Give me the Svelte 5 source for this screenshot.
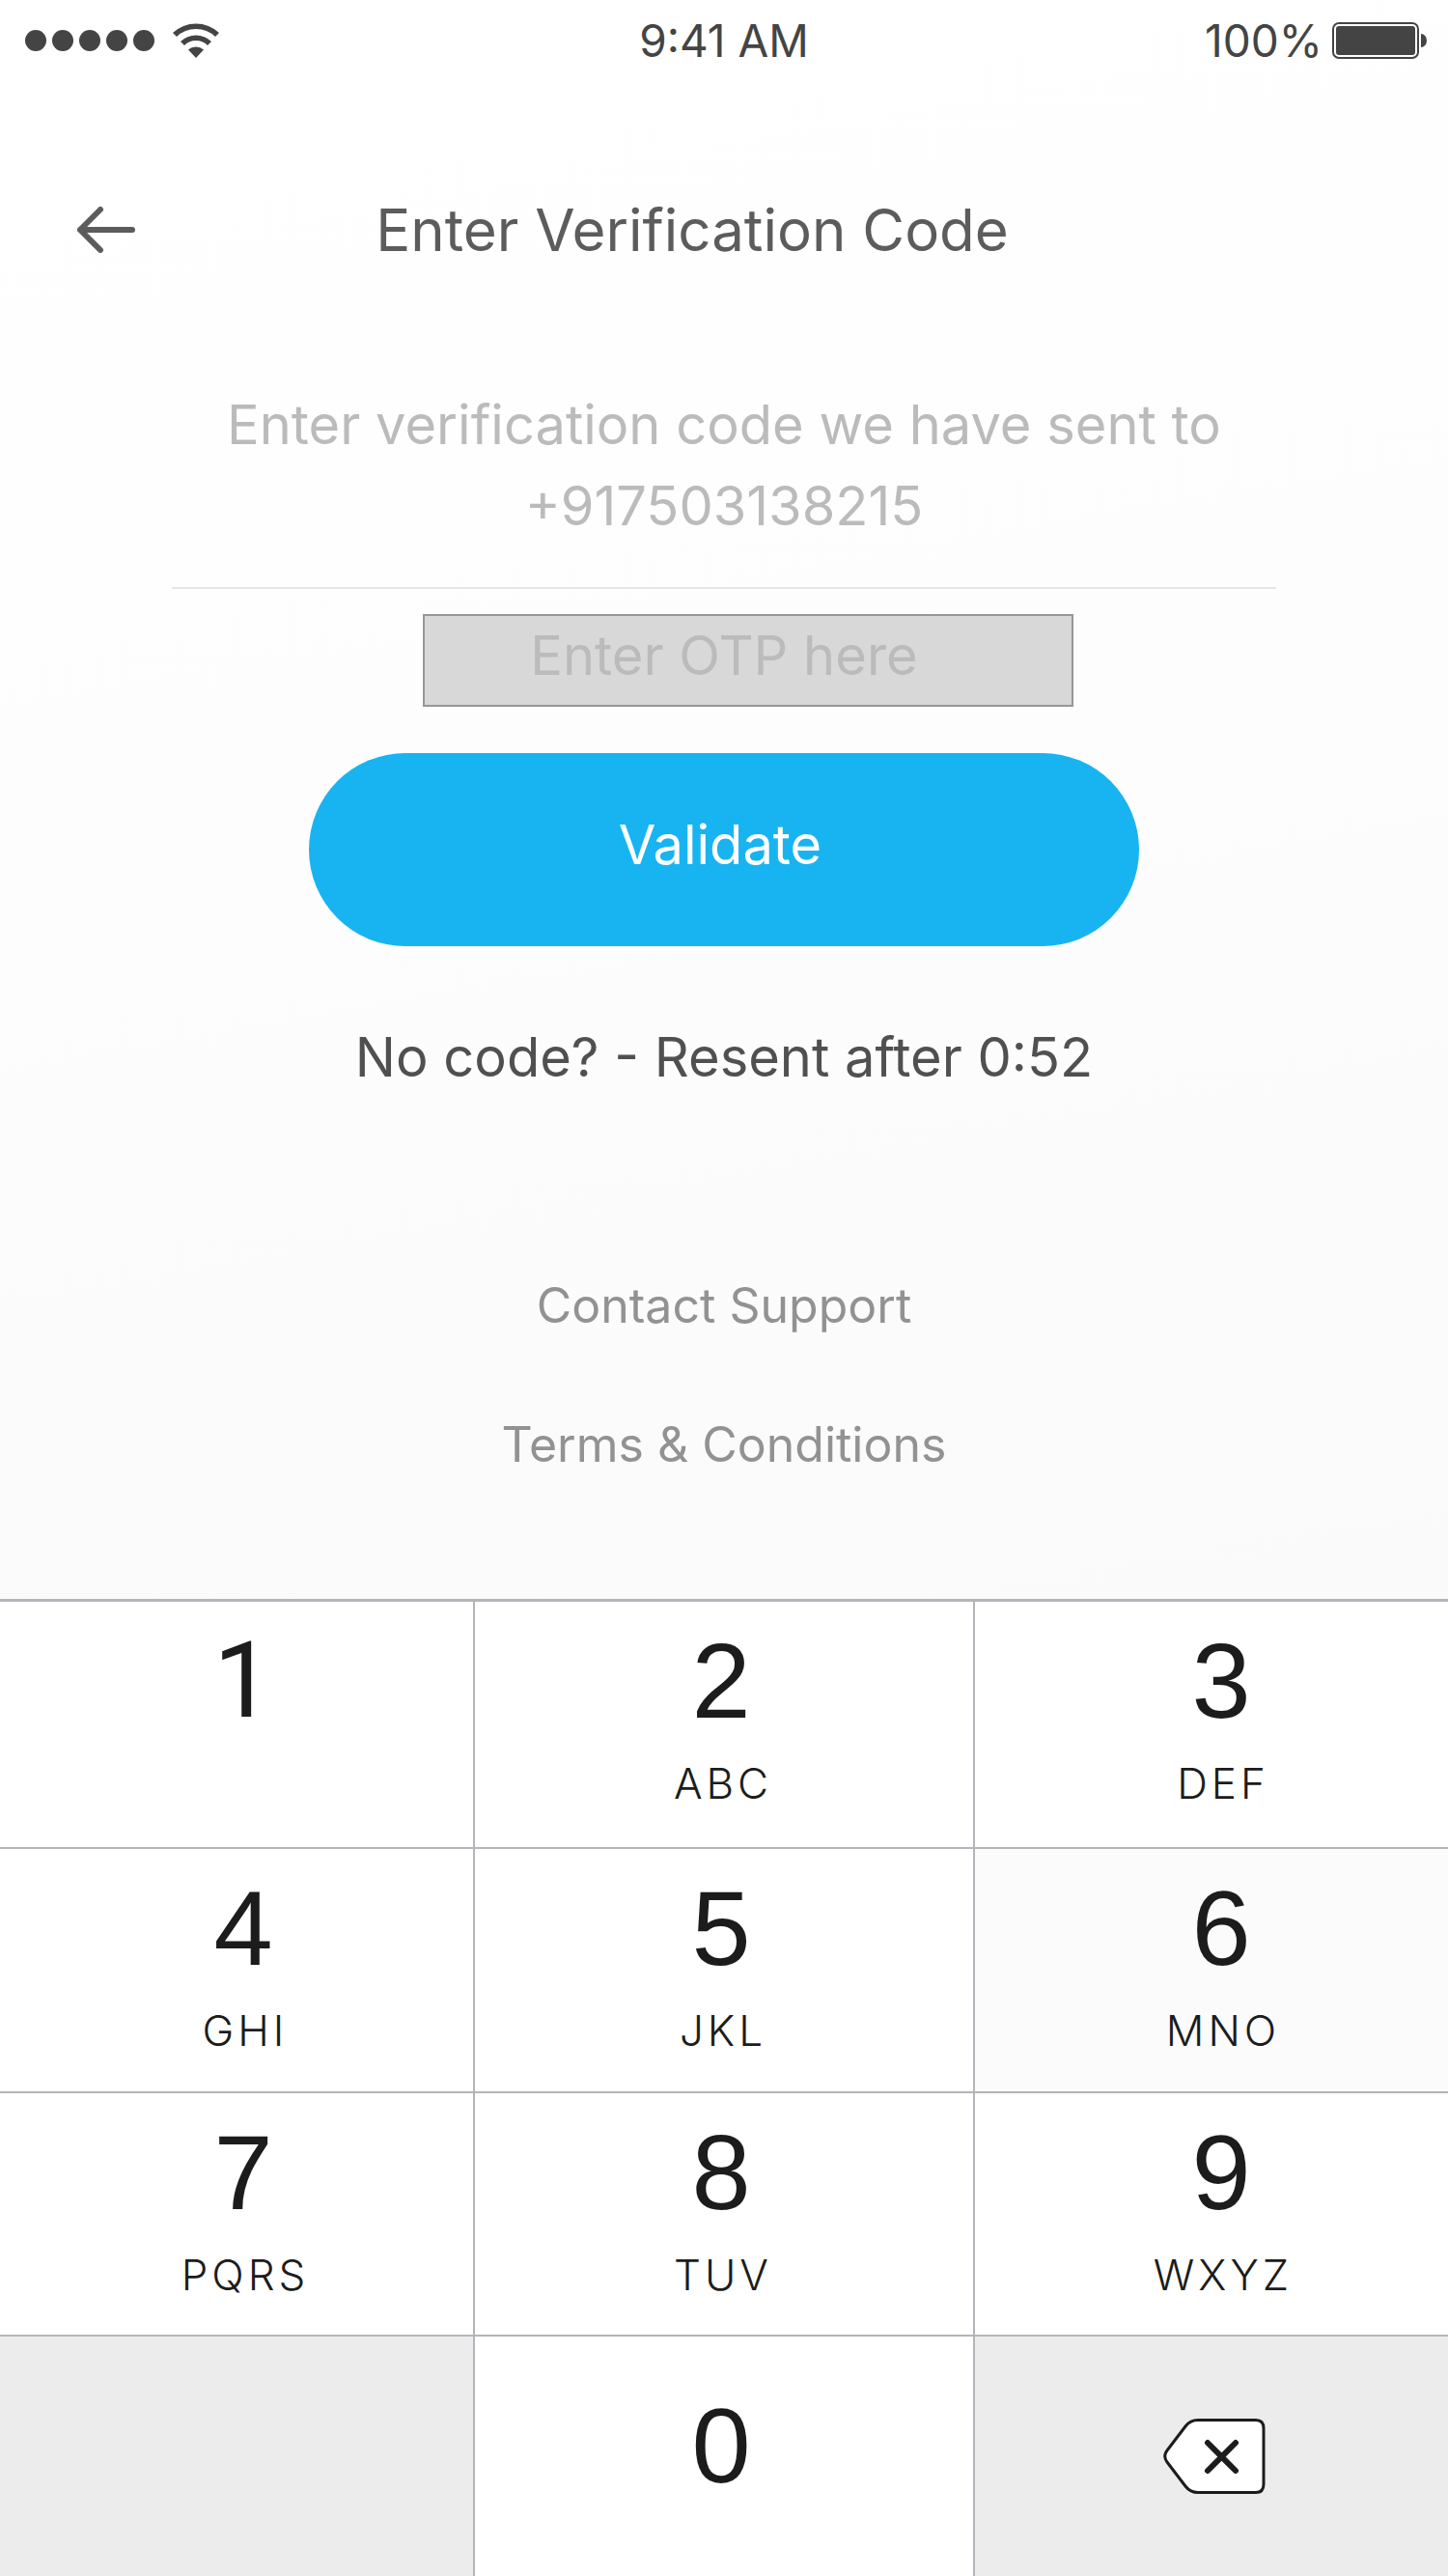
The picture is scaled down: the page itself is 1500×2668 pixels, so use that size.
<script>
  const keys = [
    { digit: '1', letters: '' },
    { digit: '2', letters: 'ABC' },
    { digit: '3', letters: 'DEF' },
    { digit: '4', letters: 'GHI' },
    { digit: '5', letters: 'JKL' },
    { digit: '6', letters: 'MNO', pressed: true },
    { digit: '7', letters: 'PQRS' },
    { digit: '8', letters: 'TUV' },
    { digit: '9', letters: 'WXYZ' },
  ];

  let code = $state('');

  const press = (digit) => (code += digit);
  const erase = () => (code = code.slice(0, -1));
</script>

<div class="screen">
  <div class="status">
    <div class="signal">
      <svg class="dots" viewBox="0 0 134 22" aria-hidden="true">
        {#each [11, 39, 67, 95, 123] as cx}
          <circle {cx} cy="11" r="11" />
        {/each}
      </svg>
      <svg class="wifi" viewBox="0 0 48 36" aria-hidden="true">
        <path d="M0 10A35 35 0 0 1 48 10L44 14A29 29 0 0 0 4 14Z" />
        <path d="M8 19A23 23 0 0 1 40 19L36 23A17 17 0 0 0 12 23Z" />
        <path d="M16 27.500A12 12 0 0 1 32 27.500L24 36Z" />
      </svg>
    </div>
    <time>9:41 AM</time>
    <div class="power">
      <span>100%</span>
      <svg class="battery" viewBox="0 0 98 38" aria-hidden="true">
        <rect x="1" y="1" width="88" height="36" rx="6" fill="none" stroke="#444" stroke-width="2" />
        <rect x="4" y="4" width="82" height="30" rx="3" />
        <path d="M92 12a6 7 0 0 1 0 14z" />
      </svg>
    </div>
  </div>

  <header>
    <button class="back" aria-label="Back">
      <svg viewBox="0 0 60 48" aria-hidden="true">
        <path d="M57 24H3M24 3L3 24L24 45" />
      </svg>
    </button>
    <h1>Enter Verification Code</h1>
  </header>

  <main>
    <p class="intro">Enter verification code we have sent to<br />+917503138215</p>
    <input type="text" inputmode="numeric" placeholder="Enter OTP here" aria-label="One-time password" bind:value={code} />
    <button class="validate">Validate</button>
    <p class="resend">No code? - Resent after 0:52</p>
    <nav>
      <a href="#support">Contact Support</a>
      <a href="#terms">Terms &amp; Conditions</a>
    </nav>
  </main>

  <div class="keypad">
    {#each keys as key}
      <button class="key" class:pressed={key.pressed} onclick={() => press(key.digit)}>
        <span class="digit">{key.digit}</span>
        <span class="letters">{key.letters}</span>
      </button>
    {/each}
    <div class="key blank"></div>
    <button class="key zero" onclick={() => press('0')}><span class="digit">0</span></button>
    <button class="key blank" aria-label="Delete" onclick={erase}>
      <svg class="delete" viewBox="0 0 106 78" aria-hidden="true">
        <path
          d="M36 1.500H96Q104 1.500 104 10V68Q104 76.500 96 76.500H36Q28 76.500 23 70L4 45Q-.5 39 4 33L23 8Q28 1.500 36 1.500Z"
          fill="#fff"
          stroke="#1c1c1c"
          stroke-width="3"
        />
        <path d="M46 25L75 54M75 25L46 54" stroke="#1c1c1c" stroke-width="6" stroke-linecap="round" />
      </svg>
    </button>
  </div>
</div>

<style>
  :global(body) {
    margin: 0;
  }

  .screen {
    display: flex;
    flex-direction: column;
    min-height: 100vh;
    background: linear-gradient(170deg, #fff 0%, #fdfdfd 35%, #fafafa 63%);
    color: #505050;
    font-family: Inter, 'Liberation Sans', sans-serif;
    font-size: 56px;
    line-height: 84px;
  }

  button {
    padding: 0;
    border: 0;
    background: none;
    color: inherit;
    font: inherit;
  }

  h1,
  p {
    margin: 0;
    font-size: inherit;
    font-weight: 400;
  }

  svg {
    display: block;
  }

  .status {
    display: grid;
    grid-template-columns: 1fr auto 1fr;
    align-items: center;
    height: 84px;
    padding: 0 22px;
    color: #444;
    fill: #444;
    font-size: 46px;
  }

  .signal,
  .power {
    display: flex;
    align-items: center;
  }

  .signal {
    gap: 19px;
    padding-left: 4px;
  }

  .power {
    justify-content: flex-end;
    gap: 10px;
  }

  .dots {
    width: 134px;
  }

  .wifi {
    width: 48px;
  }

  .battery {
    width: 98px;
  }

  header {
    display: grid;
    grid-template-columns: 1fr auto 1fr;
    align-items: center;
    padding: 112px 146px 0 80px;
    color: #5c5c5c;
    font-size: 60px;
  }

  .back svg {
    width: 60px;
    fill: none;
    stroke: #5c5c5c;
    stroke-width: 6px;
    stroke-linecap: round;
    stroke-linejoin: round;
  }

  main {
    display: flex;
    flex-direction: column;
    align-items: center;
    text-align: center;
  }

  .intro {
    align-self: stretch;
    margin: 118px 178px 0;
    padding-bottom: 42px;
    border-bottom: 2px solid #e5e5e5;
    color: #bbb;
  }

  input {
    box-sizing: border-box;
    width: 674px;
    height: 96px;
    margin: 26px 0 48px 50px;
    padding: 0 50px 10px 0;
    border: 2px solid #979797;
    border-radius: 0;
    background: #d8d8d8;
    color: #505050;
    font: inherit;
    text-align: center;
  }

  input::placeholder {
    color: #bbb;
    opacity: 1;
  }

  .validate {
    width: 860px;
    height: 200px;
    padding: 0 8px 10px 0;
    border-radius: 100px;
    background: #18b4f1;
    color: #fff;
  }

  .resend {
    margin-top: 73px;
  }

  nav {
    display: flex;
    flex-direction: column;
    align-items: center;
    gap: 60px;
    margin: 173px 0 118px;
    font-size: 50px;
  }

  nav a {
    color: #929292;
    text-decoration: none;
  }

  .keypad {
    display: grid;
    flex: 1;
    grid-template-columns: 490fr 518fr 492fr;
    grid-template-rows: 256fr 252fr 252fr 248fr;
    border-top: 3px solid #b2b5ba;
    font-family: 'Liberation Sans', Arial, sans-serif;
  }

  .key {
    display: flex;
    flex-direction: column;
    align-items: center;
    justify-content: flex-start;
    gap: 12px;
    padding: 30px 0 12px 14px;
    border-bottom: 2px solid #b2b5ba;
    border-left: 2px solid #b2b5ba;
    background: #fff;
    color: #1c1c1c;
  }

  .key:nth-child(3n + 1) {
    border-left: 0;
  }

  .key:nth-child(3n + 2) {
    padding-right: 20px;
  }

  .key:nth-child(3n) {
    padding-left: 20px;
  }

  .key:nth-child(n + 10) {
    justify-content: center;
    padding-top: 0;
    padding-bottom: 0;
    border-bottom: 0;
  }

  .key.pressed {
    background: #fbfbfb;
  }

  .key.blank {
    background: #ececec;
  }

  .key.blank:last-child {
    padding-left: 6px;
  }

  .key.zero:nth-child(n + 10) {
    padding-bottom: 22px;
  }

  .digit {
    font-size: 110px;
    line-height: 104px;
  }

  /* A plain stem without a foot for the first key */
  .key:first-child .digit {
    font-family: Roboto, sans-serif;
  }

  .letters {
    min-height: 84px;
    padding-left: 4px;
    font-family: Inter, sans-serif;
    font-size: 44px;
    font-weight: 300;
    letter-spacing: 4px;
    line-height: 84px;
  }

  .delete {
    width: 106px;
    fill: none;
  }
</style>
